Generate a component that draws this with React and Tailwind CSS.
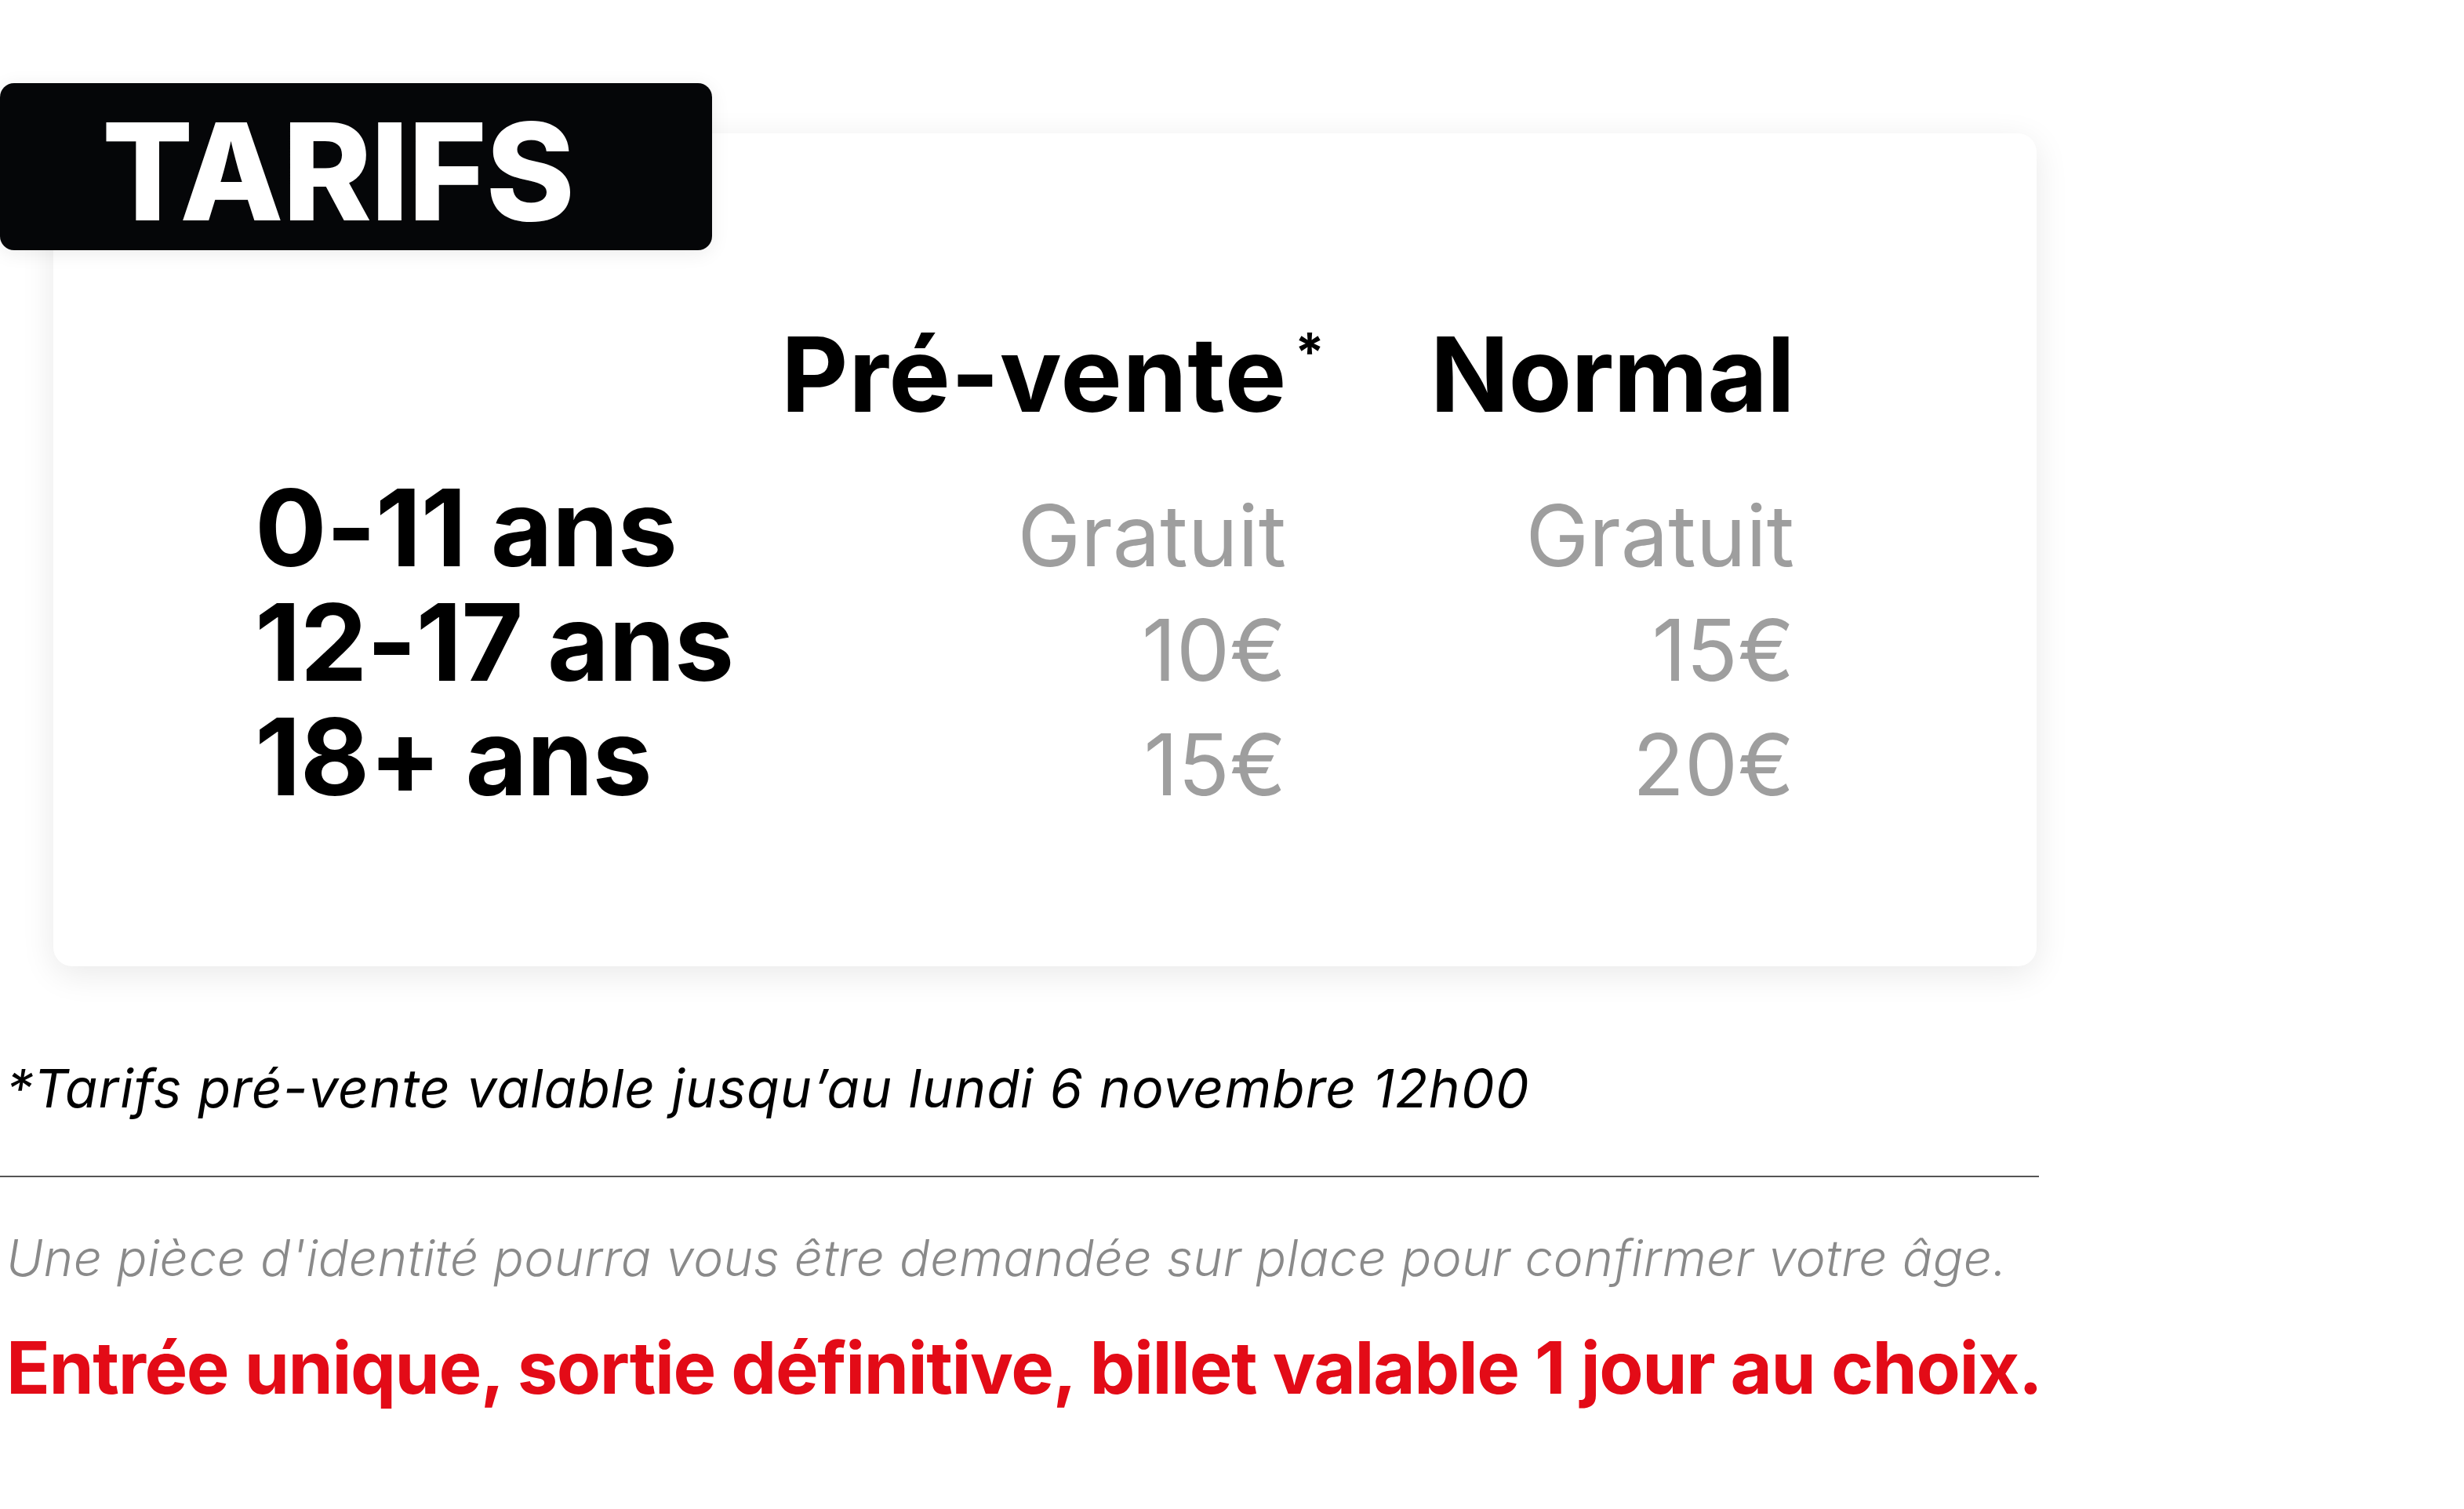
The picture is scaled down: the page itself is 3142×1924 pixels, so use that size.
// Grille tarifaire
const rows = [
  { age: "0-11 ans", pre: "Gratuit", normal: "Gratuit" },
  { age: "12-17 ans", pre: "10€", normal: "15€" },
  { age: "18+ ans", pre: "15€", normal: "20€" },
];

const App = () => {
  return (
    <div className="min-h-screen w-full bg-white font-['Inter','Liberation_Sans',sans-serif] text-black">
      <div className="w-[2600px] pt-[170px]">
        <div className="relative ml-[68px] h-[1062px] w-[2529px] rounded-[24px] bg-white shadow-[0_10px_44px_rgba(0,0,0,0.09)]">
          {/* Étiquette qui dépasse de la carte */}
          <div className="absolute left-[-68px] top-[-64px] h-[213px] w-[908px] rounded-[18px] bg-[#050608] pl-[130px] pt-[26px] shadow-[0_4px_24px_rgba(0,0,0,0.08)]">
            <span className="text-[172px] font-extrabold leading-none tracking-[-1.5px] text-white">
              TARIFS
            </span>
          </div>

          <div className="pl-[257px] pt-[241px]">
            <div className="grid grid-cols-[671px_644px_648px] items-baseline">
              <div />
              <div className="whitespace-nowrap text-[132px] font-bold leading-none tracking-[0.6px]">
                Pré-vente
                <span className="relative top-[-52px] ml-[10px] text-[68px] font-bold">*</span>
              </div>
              <div className="text-right text-[132px] font-bold leading-none tracking-[-0.8px]">
                Normal
              </div>
            </div>

            <div className="mt-[57px] grid grid-cols-[671px_644px_648px] items-baseline">
              {rows.map((r) => (
                <div key={r.age} className="contents">
                  <div className="whitespace-nowrap text-[136px] font-bold leading-[146px] tracking-[-0.8px]">
                    {r.age}
                  </div>
                  <div className="text-right text-[108px] font-normal leading-[124px] text-[#9e9e9e]">
                    {r.pre}
                  </div>
                  <div className="text-right text-[108px] font-normal leading-[124px] text-[#9e9e9e]">
                    {r.normal}
                  </div>
                </div>
              ))}
            </div>
          </div>
        </div>

        <p className="ml-[8px] mt-[121px] whitespace-nowrap text-[68px] italic leading-none tracking-[1px]">
          *Tarifs pré-vente valable jusqu’au lundi 6 novembre 12h00
        </p>

        <div className="mt-[78px] h-[2px] w-[2600px] bg-[#555555]" />

        <p className="ml-[8px] mt-[71px] whitespace-nowrap text-[64px] font-light italic leading-none tracking-[0.5px] text-[#8a8a8a]">
          Une pièce d'identité pourra vous être demandée sur place pour confirmer votre âge.
        </p>

        <p className="ml-[8px] mt-[62px] whitespace-nowrap text-[92px] font-bold leading-none tracking-[-1.4px] text-[#e30b17]">
          Entrée unique, sortie définitive, billet valable 1 jour au choix.
        </p>
      </div>
    </div>
  );
};

export default App;
